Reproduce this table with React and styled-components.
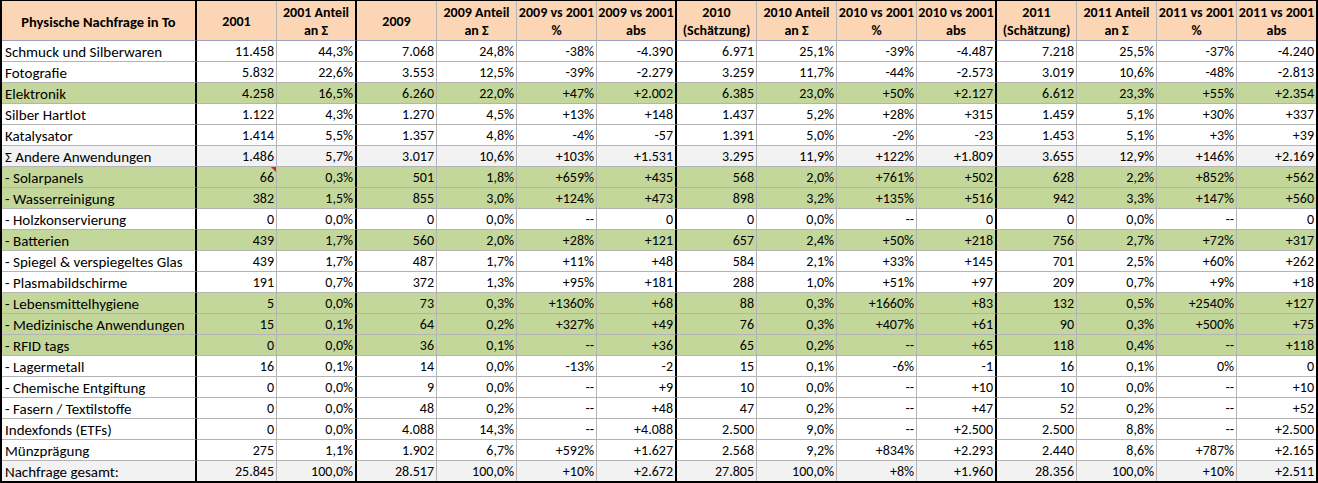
import styled, { createGlobalStyle } from 'styled-components'

const GlobalStyle = createGlobalStyle`
  html, body {
    margin: 0;
    padding: 0;
    background: #ffffff;
  }
`

const FONT = `Calibri, Carlito, Lato, "Open Sans", sans-serif`

const COLORS = {
  head: '#fcd5b4',
  green: '#c4d79b',
  grey: '#f2f2f2',
  white: '#ffffff',
  line: '#b4b4b4',
  headLine: '#9ea1bf',
}

// columns that end a block get the thick black divider
const SEPARATORS = [0, 2, 6, 10]
const LAST = 14

const Sheet = styled.div`
  display: grid;
  grid-template-columns: 195px repeat(13, 80px) 79px;
  grid-template-rows: 40px repeat(20, 21px) 20px;
  width: max-content;
  border-top: 1px solid #000;
  border-left: 2px solid #000;
  border-right: 2px solid #000;
  border-bottom: 2px solid #000;
  font-family: ${FONT};
  color: #000;
`

const HeadCell = styled.div`
  box-sizing: border-box;
  background: ${COLORS.head};
  border-bottom: 1px solid ${COLORS.headLine};
  border-right: ${(p) => (p.$sep ? '2px solid #000' : p.$last ? 'none' : `1px solid ${COLORS.line}`)};
  display: flex;
  flex-direction: column;
  align-items: center;
  justify-content: center;
  padding-top: 2px;
  font-size: ${(p) => (p.$label ? '14.5px' : '14px')};
  font-weight: 700;
  line-height: 18px;
  white-space: nowrap;
  overflow: hidden;
`

const Cell = styled.div`
  position: relative;
  box-sizing: border-box;
  background: ${(p) => COLORS[p.$fill] || COLORS.white};
  border-bottom: ${(p) => (p.$bottom ? 'none' : `1px solid ${COLORS.line}`)};
  border-right: ${(p) => (p.$sep ? '2px solid #000' : p.$last ? 'none' : `1px solid ${COLORS.line}`)};
  display: flex;
  align-items: center;
  justify-content: ${(p) => (p.$label ? 'flex-start' : 'flex-end')};
  padding: 1px 2px 0 3px;
  font-size: ${(p) => (p.$label ? '15px' : '14px')};
  line-height: 20px;
  white-space: nowrap;
  overflow: hidden;
`

// Excel comment marker in the top right corner
const CommentMark = styled.span`
  position: absolute;
  top: 0;
  right: 0;
  width: 0;
  height: 0;
  border-top: 5px solid #e02020;
  border-left: 5px solid transparent;
`

const headers = [
  ['Physische Nachfrage in To'],
  ['2001'],
  ['2001 Anteil', 'an Σ'],
  ['2009'],
  ['2009 Anteil', 'an Σ'],
  ['2009 vs 2001', '%'],
  ['2009 vs 2001', 'abs'],
  ['2010', '(Schätzung)'],
  ['2010 Anteil', 'an Σ'],
  ['2010 vs 2001', '%'],
  ['2010 vs 2001', 'abs'],
  ['2011', '(Schätzung)'],
  ['2011 Anteil', 'an Σ'],
  ['2011 vs 2001', '%'],
  ['2011 vs 2001', 'abs'],
]

const rows = [
  { fill: 'white', cells: ['Schmuck und Silberwaren', '11.458', '44,3%', '7.068', '24,8%', '-38%', '-4.390', '6.971', '25,1%', '-39%', '-4.487', '7.218', '25,5%', '-37%', '-4.240'] },
  { fill: 'white', cells: ['Fotografie', '5.832', '22,6%', '3.553', '12,5%', '-39%', '-2.279', '3.259', '11,7%', '-44%', '-2.573', '3.019', '10,6%', '-48%', '-2.813'] },
  { fill: 'green', cells: ['Elektronik', '4.258', '16,5%', '6.260', '22,0%', '+47%', '+2.002', '6.385', '23,0%', '+50%', '+2.127', '6.612', '23,3%', '+55%', '+2.354'] },
  { fill: 'white', cells: ['Silber Hartlot', '1.122', '4,3%', '1.270', '4,5%', '+13%', '+148', '1.437', '5,2%', '+28%', '+315', '1.459', '5,1%', '+30%', '+337'] },
  { fill: 'white', cells: ['Katalysator', '1.414', '5,5%', '1.357', '4,8%', '-4%', '-57', '1.391', '5,0%', '-2%', '-23', '1.453', '5,1%', '+3%', '+39'] },
  { fill: 'grey', cells: ['Σ Andere Anwendungen', '1.486', '5,7%', '3.017', '10,6%', '+103%', '+1.531', '3.295', '11,9%', '+122%', '+1.809', '3.655', '12,9%', '+146%', '+2.169'] },
  { fill: 'green', comment: 1, cells: ['- Solarpanels', '66', '0,3%', '501', '1,8%', '+659%', '+435', '568', '2,0%', '+761%', '+502', '628', '2,2%', '+852%', '+562'] },
  { fill: 'green', cells: ['- Wasserreinigung', '382', '1,5%', '855', '3,0%', '+124%', '+473', '898', '3,2%', '+135%', '+516', '942', '3,3%', '+147%', '+560'] },
  { fill: 'white', cells: ['- Holzkonservierung', '0', '0,0%', '0', '0,0%', '--', '0', '0', '0,0%', '--', '0', '0', '0,0%', '--', '0'] },
  { fill: 'green', cells: ['- Batterien', '439', '1,7%', '560', '2,0%', '+28%', '+121', '657', '2,4%', '+50%', '+218', '756', '2,7%', '+72%', '+317'] },
  { fill: 'white', cells: ['- Spiegel & verspiegeltes Glas', '439', '1,7%', '487', '1,7%', '+11%', '+48', '584', '2,1%', '+33%', '+145', '701', '2,5%', '+60%', '+262'] },
  { fill: 'white', cells: ['- Plasmabildschirme', '191', '0,7%', '372', '1,3%', '+95%', '+181', '288', '1,0%', '+51%', '+97', '209', '0,7%', '+9%', '+18'] },
  { fill: 'green', cells: ['- Lebensmittelhygiene', '5', '0,0%', '73', '0,3%', '+1360%', '+68', '88', '0,3%', '+1660%', '+83', '132', '0,5%', '+2540%', '+127'] },
  { fill: 'green', cells: ['- Medizinische Anwendungen', '15', '0,1%', '64', '0,2%', '+327%', '+49', '76', '0,3%', '+407%', '+61', '90', '0,3%', '+500%', '+75'] },
  { fill: 'green', cells: ['- RFID tags', '0', '0,0%', '36', '0,1%', '--', '+36', '65', '0,2%', '--', '+65', '118', '0,4%', '--', '+118'] },
  { fill: 'white', cells: ['- Lagermetall', '16', '0,1%', '14', '0,0%', '-13%', '-2', '15', '0,1%', '-6%', '-1', '16', '0,1%', '0%', '0'] },
  { fill: 'white', cells: ['- Chemische Entgiftung', '0', '0,0%', '9', '0,0%', '--', '+9', '10', '0,0%', '--', '+10', '10', '0,0%', '--', '+10'] },
  { fill: 'white', cells: ['- Fasern / Textilstoffe', '0', '0,0%', '48', '0,2%', '--', '+48', '47', '0,2%', '--', '+47', '52', '0,2%', '--', '+52'] },
  { fill: 'white', cells: ['Indexfonds (ETFs)', '0', '0,0%', '4.088', '14,3%', '--', '+4.088', '2.500', '9,0%', '--', '+2.500', '2.500', '8,8%', '--', '+2.500'] },
  { fill: 'white', cells: ['Münzprägung', '275', '1,1%', '1.902', '6,7%', '+592%', '+1.627', '2.568', '9,2%', '+834%', '+2.293', '2.440', '8,6%', '+787%', '+2.165'] },
  { fill: 'grey', cells: ['Nachfrage gesamt:', '25.845', '100,0%', '28.517', '100,0%', '+10%', '+2.672', '27.805', '100,0%', '+8%', '+1.960', '28.356', '100,0%', '+10%', '+2.511'] },
]

const App = () => {
  return (
    <>
      <GlobalStyle />
      <Sheet>
        {headers.map((lines, c) => (
          <HeadCell key={`h${c}`} $label={c === 0} $sep={SEPARATORS.includes(c)} $last={c === LAST}>
            {lines.map((line) => (
              <span key={line}>{line}</span>
            ))}
          </HeadCell>
        ))}

        {rows.map((row, r) =>
          row.cells.map((value, c) => (
            <Cell
              key={`${r}-${c}`}
              $fill={row.fill}
              $label={c === 0}
              $sep={SEPARATORS.includes(c)}
              $last={c === LAST}
              $bottom={r === rows.length - 1}
            >
              {value}
              {row.comment === c && <CommentMark />}
            </Cell>
          ))
        )}
      </Sheet>
    </>
  )
}

export default App
